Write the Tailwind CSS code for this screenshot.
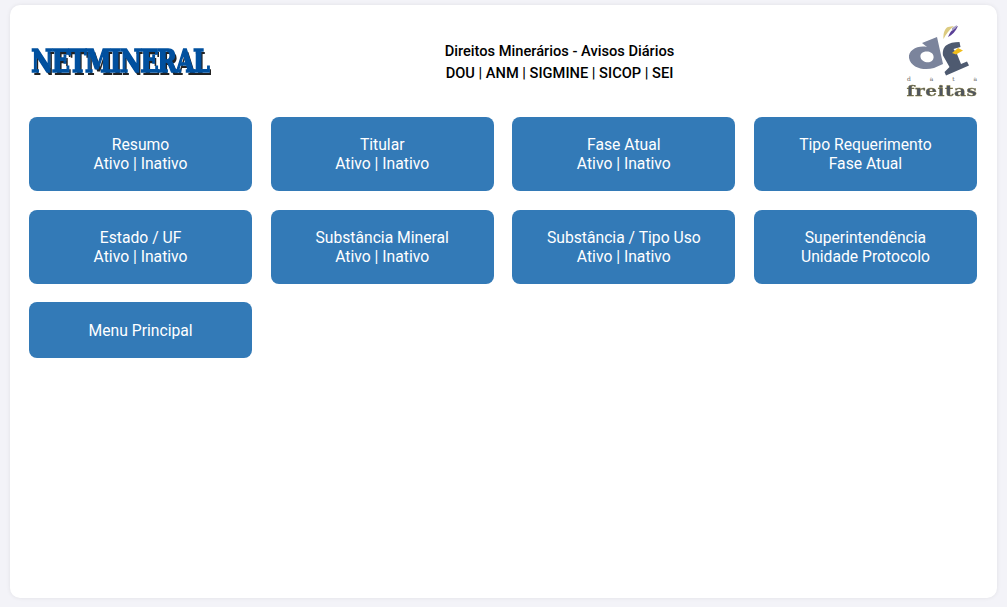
<!doctype html>
<html lang="pt"><head><meta charset="utf-8"><title>Netmineral</title>
<script src="https://cdn.jsdelivr.net/npm/@tailwindcss/browser@4"></script></head>
<body class="bg-[#f3f3f8] h-[607px] overflow-hidden font-['Roboto',sans-serif]">
<div class="pt-[5px] pl-[10px] pr-[10px] pb-[9px] h-[607px]">
<main class="h-[593px] bg-white rounded-[10px] shadow-[0_0_4px_rgba(0,0,0,0.08)] pl-[19px] pr-[20px]">
<header class="h-[112px] flex items-center justify-between">
<div class="w-[190px] pl-[3px] font-['DejaVu_Serif',serif] font-bold text-[#00509f] text-[31px] leading-none tracking-[-1.75px] scale-x-[0.77] origin-left [-webkit-text-stroke:1.6px_#00509f] [text-shadow:2.5px_2.5px_0_#222] whitespace-nowrap blur-[0.3px]">NETMINERAL</div>
<div class="text-center text-black font-medium text-[14.65px] leading-[22px] pr-[6px] pt-[1px]">
<div>Direitos Minerários - Avisos Diários</div>
<div>DOU | ANM | SIGMINE | SICOP | SEI</div>
</div>
<div class="w-[72px] h-[80px] mr-[-1px] mt-[3px] relative">
<svg class="absolute left-0 top-0 blur-[0.4px]" width="72" height="58" viewBox="0 0 72 58">
<path d="M37.5 16 C37 10 39 5 42 4 L48 3 C43 7 40 11 37.5 16Z" fill="#dccb80"/>
<path d="M42 14 C44 9 47 5 52 3 C50 8 46 12 42 14Z" fill="#5a3f96"/>
<path d="M46 5 L51 2 L50 5 L46 8Z" fill="#a9a3c4"/>
<path fill-rule="evenodd" fill="#7b849c" d="M16 20 L31 14 L37 41 L28 45 C18 48 5 45 3 35 C2 27 12 22 21 24 Z M21 28.5 C16 28.5 14 31 14.5 34 C15 38 20 40 24 39 C27 38 28 35 27.5 33 C27 30 24 28.5 21 28.5Z"/>
<path fill="#4e5a70" d="M53.5 19 C48 19 43 20 40 22.5 C37 25 36.5 29 37 32.5 L43.5 44 L38.5 49 L40 52.5 L63 42.5 L61 38.5 L55 41 L51 31 L47.5 26 L54.5 24Z"/>
<path fill="#f0bd1c" d="M46 30 L52 25 L57 27.5 L50 31.5Z"/>
</svg>
<div class="absolute left-[0px] top-[52px] w-[72px] flex justify-between px-[1px] text-[6px] leading-[8px] text-[#666] font-['DejaVu_Serif',serif]"><span>d</span><span>a</span><span>t</span><span>a</span></div>
<div class="absolute left-0 top-[60px] w-[72px] text-center text-[14px] leading-[16px] font-bold font-['DejaVu_Serif',serif] text-[#4f5560] tracking-[0.4px] scale-x-[1.32] [-webkit-text-stroke:0.3px_#8a7f3a] whitespace-nowrap blur-[0.3px]">freitas</div>
</div>
</header>
<nav class="grid grid-cols-4 gap-x-[18.5px] gap-y-[18.5px] text-white text-center text-[15.7px] leading-[18.7px]">
<a class="h-[74px] pt-[1px] flex items-center justify-center rounded-lg bg-[#337ab7]">Resumo<br>Ativo | Inativo</a>
<a class="h-[74px] pt-[1px] flex items-center justify-center rounded-lg bg-[#337ab7]">Titular<br>Ativo | Inativo</a>
<a class="h-[74px] pt-[1px] flex items-center justify-center rounded-lg bg-[#337ab7]">Fase Atual<br>Ativo | Inativo</a>
<a class="h-[74px] pt-[1px] flex items-center justify-center rounded-lg bg-[#337ab7]">Tipo Requerimento<br>Fase Atual</a>
<a class="h-[74px] pt-[2px] flex items-center justify-center rounded-lg bg-[#337ab7]">Estado / UF<br>Ativo | Inativo</a>
<a class="h-[74px] pt-[2px] flex items-center justify-center rounded-lg bg-[#337ab7]">Substância Mineral<br>Ativo | Inativo</a>
<a class="h-[74px] pt-[2px] flex items-center justify-center rounded-lg bg-[#337ab7]">Substância / Tipo Uso<br>Ativo | Inativo</a>
<a class="h-[74px] pt-[2px] flex items-center justify-center rounded-lg bg-[#337ab7]">Superintendência<br>Unidade Protocolo</a>
<a class="h-[55.5px] pt-[3px] flex items-center justify-center rounded-lg bg-[#337ab7]">Menu Principal</a>
</nav>
</main>
</div>
</body></html>
